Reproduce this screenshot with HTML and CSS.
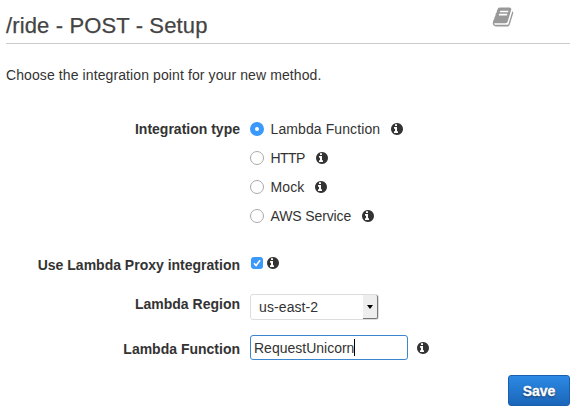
FILE: index.html
```html
<!DOCTYPE html>
<html lang="en">
<head>
<meta charset="utf-8">
<title>/ride - POST - Setup</title>
<link rel="stylesheet" href="styles.css">
</head>
<body>
<svg class="defs" width="0" height="0">
  <symbol id="info" viewBox="128 128 1536 1536"><path d="M1024 1376v-160q0-14-9-23t-23-9h-96v-512q0-14-9-23t-23-9h-320q-14 0-23 9t-9 23v160q0 14 9 23t23 9h96v320h-96q-14 0-23 9t-9 23v160q0 14 9 23t23 9h448q14 0 23-9t9-23zM896 480v-160q0-14-9-23t-23-9h-192q-14 0-23 9t-9 23v160q0 14 9 23t23 9h192q14 0 23-9t9-23zM1664 896q0 209-103 385.5t-279.5 279.5-385.5 103-385.5-103-279.5-279.5-103-385.5 103-385.5 279.5-279.5 385.5-103 385.5 103 279.5 279.5 103 385.5z"/></symbol>
</svg>
<header class="header">
  <h1 class="title">/ride - POST - Setup</h1>
  <svg class="book" viewBox="0 0 1792 1792"><path d="M1703 478q40 57 18 129l-275 906q-19 64-76.500 107.500t-122.500 43.500h-923q-77 0-148.500-53.500t-99.500-131.500q-24-67-2-127 0-4 3-27t4-37q1-8-3-21.500t-3-19.500q2-11 8-21t16.500-23.500 16.500-23.500q23-38 45-91.500t30-91.500q3-10 .5-30t-.5-28q3-11 17-28t17-23q21-36 42-92t25-90q1-9-2.500-32t.5-28q4-13 22-30.500t22-22.500q19-26 42.500-84.500t27.500-96.500q1-8-3-25.500t-2-26.500q2-8 9-18t18-23 17-21q8-12 16.500-30.500t15-35 16-36 19.500-32 26.500-23.500 36-11.500 47.500 5.500l-1 3q38-9 51-9h761q74 0 114 56t18 130l-274 906q-36 119-71.500 153.500t-128.500 34.500h-869q-27 0-38 15-11 16-1 43 24 70 144 70h923q29 0 56-15.500t35-41.500l300-987q7-22 5-57 38 15 59 43zm-1064 2q-4 13 2 22.500t20 9.500h608q13 0 25.500-9.500t16.500-22.500l21-64q4-13-2-22.500t-20-9.500h-608q-13 0-25.500 9.500t-16.500 22.500zm-83 256q-4 13 2 22.500t20 9.500h608q13 0 25.500-9.500t16.500-22.500l21-64q4-13-2-22.500t-20-9.500h-608q-13 0-25.500 9.500t-16.500 22.500z"/></svg>
</header>
<p class="intro">Choose the integration point for your new method.</p>
<main class="form">
  <div class="label">Integration type</div>
  <div class="options">
    <label class="option"><span class="radio on"></span><span class="wide">Lambda Function</span><svg class="info"><use href="#info"/></svg></label>
    <label class="option"><span class="radio"></span><span class="tight">HTTP</span><svg class="info"><use href="#info"/></svg></label>
    <label class="option"><span class="radio"></span><span class="wide">Mock</span><svg class="info"><use href="#info"/></svg></label>
    <label class="option"><span class="radio"></span><span class="snug">AWS Service</span><svg class="info"><use href="#info"/></svg></label>
  </div>
  <div class="label">Use Lambda Proxy integration</div>
  <div class="proxy">
    <span class="check"><svg viewBox="0 0 12 12"><path d="M3 6.300 5.100 8.600 9.100 3.200"/></svg></span>
    <svg class="info"><use href="#info"/></svg>
  </div>
  <div class="label">Lambda Region</div>
  <div class="select"><span class="value">us-east-2</span><span class="drop"></span></div>
  <div class="label function-label">Lambda Function</div>
  <div class="function"><div class="input">RequestUnicorn<span class="caret"></span></div><svg class="info"><use href="#info"/></svg></div>
</main>
<footer class="footer"><button class="save">Save</button></footer>
</body>
</html>
```
FILE: styles.css
```css
* { box-sizing: border-box; }
body {
  margin: 0;
  padding: 0 5px 0 6px;
  width: 575px;
  height: 413px;
  overflow: hidden;
  background: #fff;
  color: #333;
  font: 14px/20px "Liberation Sans", Arial, sans-serif;
}
.defs { position: absolute; }
.header {
  display: flex;
  justify-content: space-between;
  height: 44px;
  border-bottom: 1px solid #ccc;
}
.title {
  margin: 11px 0 0;
  font-size: 22px;
  line-height: 30px;
  font-weight: 400;
  letter-spacing: 0.13px;
  color: #444;
  -webkit-text-stroke: 0.25px #444;
}
.book { width: 22px; height: 22px; margin: 6px 56px 0 0; fill: #999; }
.intro { margin: 21px 0 0; letter-spacing: 0.1px; }
.form {
  display: grid;
  grid-template-columns: 234px 1fr;
  grid-template-rows: 136px 39px 46px 26px;
  column-gap: 10px;
  margin-top: 29px;
}
.label { font-weight: 700; text-align: right; padding-top: 5px; }
.function-label { padding-top: 4px; }
.options { padding-top: 5px; }
.option { display: flex; align-items: center; height: 20px; margin-bottom: 9px; }
.radio {
  width: 14px;
  height: 14px;
  margin-right: 6.500px;
  border: 1px solid #aaa;
  border-radius: 50%;
}
.radio.on {
  border: 5px solid #3b99fc;
  background: #fff;
}
.wide { letter-spacing: 0.1px; }
.tight { letter-spacing: -0.6px; }
.snug { letter-spacing: -0.12px; }
.info { width: 12px; height: 12px; fill: #333; flex: none; }
.option .info { margin-left: 11px; }
.proxy { display: flex; gap: 3.500px; padding: 7px 0 0 1px; }
.check { width: 12px; height: 12px; border-radius: 3px; background: #3b99fc; }
.check svg { display: block; fill: none; stroke: #fff; stroke-width: 1.600; }
.select {
  display: flex;
  justify-content: space-between;
  width: 129px;
  height: 26px;
  margin-top: 5px;
  border: 1px solid #ddd;
  border-radius: 3px;
}
.value { padding: 2px 0 0 8px; letter-spacing: 0.1px; }
.drop {
  display: flex;
  align-items: center;
  justify-content: center;
  width: 15px;
  background: #eee;
  border-right: 1px solid #777;
  border-bottom: 1px solid #777;
  border-radius: 0 2px 2px 0;
}
.drop::after { content: ""; border: 3px solid transparent; border-top: 4px solid #000; border-bottom: 0; }
.function { display: flex; align-items: center; gap: 9px; }
.input {
  display: flex;
  align-items: center;
  align-self: flex-start;
  width: 158px;
  height: 25px;
  padding-left: 3px;
  border: 1px solid #3a87cf;
  border-radius: 3px;
}
.caret { width: 1px; height: 17px; background: #000; }
.footer { display: flex; justify-content: flex-end; margin-top: 14px; }
.save {
  width: 62px;
  height: 31px;
  padding: 0;
  border: 1px solid #1a5fae;
  border-radius: 3px;
  background: linear-gradient(#2d89e5, #1a66b8);
  color: #fff;
  font: 700 14px/20px "Liberation Sans", Arial, sans-serif;
  -webkit-text-stroke: 0.3px #fff;
  text-shadow: 0 1px 2px rgba(0, 0, 0, .6);
}
```
